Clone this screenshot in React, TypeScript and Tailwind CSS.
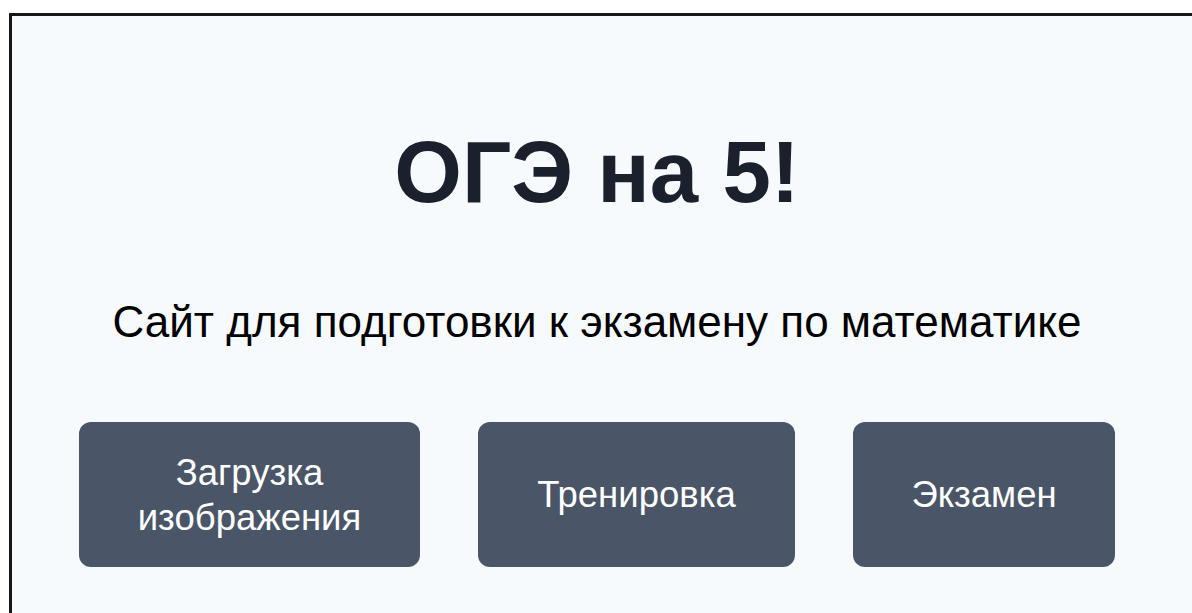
const buttons = [
  { label: 'Загрузка изображения', width: 'w-[341px]' },
  { label: 'Тренировка', width: 'w-[317px]' },
  { label: 'Экзамен', width: 'w-[262px]' },
];

export default function App() {
  return (
    <div
      className="w-[1192px] h-[613px] overflow-hidden bg-white pt-[13px] pl-[9px]"
      style={{ fontFamily: '"Liberation Sans", Arial, sans-serif' }}
    >
      <div className="w-[1220px] h-[640px] border-t-[3px] border-l-[3px] border-[#161616] bg-[#f7fafc]">
        <main className="w-[1170px] flex flex-col items-center pt-[112px]">
          <h1 className="text-[87px] leading-none font-bold text-[#1a202c]">ОГЭ на 5!</h1>
          <p className="mt-[85px] text-[44px] leading-none text-black">
            Сайт для подготовки к экзамену по математике
          </p>
          <div className="mt-[78px] flex gap-[58px]">
            {buttons.map((b) => (
              <button
                key={b.label}
                type="button"
                className={`${b.width} h-[145px] px-12 rounded-xl bg-[#4a5568] text-white text-[36.5px] leading-[45px] text-center`}
              >
                {b.label}
              </button>
            ))}
          </div>
        </main>
      </div>
    </div>
  );
}
